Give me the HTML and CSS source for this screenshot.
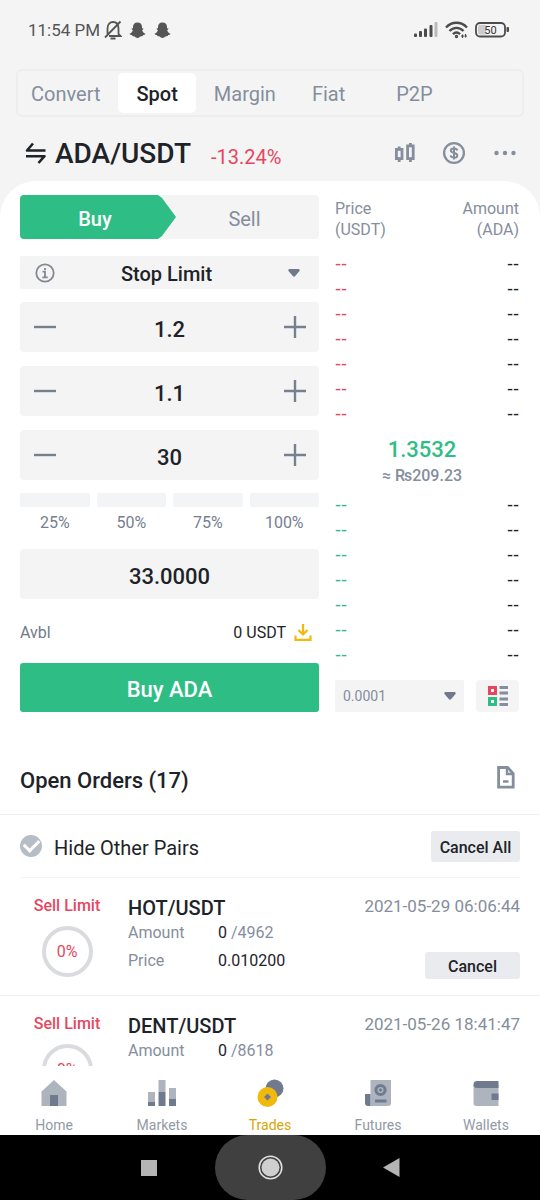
FILE: index.html
```html
<!DOCTYPE html>
<html lang="en">
<head>
<meta charset="utf-8">
<meta name="viewport" content="width=device-width, initial-scale=1">
<title>ADA/USDT</title>
<link rel="stylesheet" href="styles.css">
</head>
<body>
<div class="app">
  <header class="status">
    <div class="status-side">
      <span>11:54 PM</span>
      <svg width="18" height="20" viewBox="0 0 18 20" fill="none" stroke="#555" stroke-width="1.8"><path d="M3.5 14V8.500C3.500 4 6 2 9 2s5.500 2 5.500 6.500V14l2 2H5M1 17.500 16.500 1.500M6.500 18.500h5"/></svg>
      <svg class="ghost" width="17" height="17" viewBox="0 0 17 17" fill="#555"><path d="M8.500 .5c3 0 4.500 2 4.500 4.300v1.500l1.700.2-1.500 1.700c.6 1.800 1.600 3 3.300 3.600-.3 1-1.500 1.200-2.300 1.300-.3 1-.8 1.200-1.800 1.100-1.400-.1-2.300 1.800-3.900 1.800s-2.500-1.900-3.900-1.800c-1 .1-1.500-.1-1.800-1.100-.8-.1-2-.3-2.300-1.300 1.700-.6 2.700-1.800 3.300-3.600L2.300 6.500 4 6.300V4.800C4 2.500 5.500.5 8.500.5z"/></svg>
      <svg class="ghost" width="17" height="17" viewBox="0 0 17 17" fill="#555"><path d="M8.500 .5c3 0 4.500 2 4.500 4.300v1.500l1.700.2-1.500 1.700c.6 1.800 1.600 3 3.300 3.600-.3 1-1.500 1.200-2.300 1.300-.3 1-.8 1.200-1.800 1.100-1.400-.1-2.300 1.800-3.900 1.800s-2.500-1.900-3.900-1.800c-1 .1-1.500-.1-1.800-1.100-.8-.1-2-.3-2.300-1.300 1.700-.6 2.700-1.800 3.300-3.600L2.300 6.500 4 6.300V4.800C4 2.500 5.500.5 8.500.5z"/></svg>
    </div>
    <div class="status-side">
      <svg width="24" height="16" viewBox="0 0 24 16" fill="#4c4c4c"><rect y="11.500" width="3" height="3.500" rx="1"/><rect x="5" y="9" width="3" height="6" rx="1"/><rect x="10" y="6.500" width="3" height="8.500" rx="1"/><rect x="15.500" y="3" width="3" height="12" rx="1"/><rect x="20.500" y="0" width="3" height="15" rx="1" fill="#bbb"/></svg>
      <svg width="23" height="18" viewBox="0 0 23 18" fill="none" stroke="#4c4c4c" stroke-width="2.400"><path d="M1 6.500C7 .2 16 .2 22 6.500M4.500 10c4-4.200 10-4.200 14 0M8 13.200c2-2.200 5-2.200 7 0"/><circle cx="11.500" cy="15.500" r="1" stroke-width="1.500"/><path d="M17.500 17v-3.500M20.500 13v3.500M16 15h3M19.500 15H22" stroke-width="1.200"/></svg>
      <svg width="35" height="16" viewBox="0 0 35 16"><rect x="1" y="1" width="29" height="13.500" rx="4" fill="none" stroke="#4c4c4c" stroke-width="1.800"/><path d="M5 3h6v9.500H5q-2 0-2-2V5q0-2 2-2z" fill="#ccc"/><rect x="31.500" y="5" width="2.500" height="5" rx="1" fill="#4c4c4c"/><text x="15.500" y="12" class="battery" text-anchor="middle">50</text></svg>
    </div>
  </header>

  <nav class="modes">
    <a href="#" class="mode">Convert</a>
    <a href="#" class="mode mode-on">Spot</a>
    <a href="#" class="mode">Margin</a>
    <a href="#" class="mode">Fiat</a>
    <a href="#" class="mode">P2P</a>
  </nav>

  <div class="pair">
    <svg width="22" height="22" viewBox="0 0 22 22" fill="none" stroke="#1e2329" stroke-width="2.600" stroke-linejoin="round"><path d="M8 1.500 2 8.500H20.500M1 14.200h18.500L13.500 21"/></svg>
    <h1 class="pair-name">ADA/USDT</h1>
    <span class="pair-change">-13.24%</span>
    <div class="pair-tools">
      <button class="icon-btn" aria-label="Chart"><svg width="20" height="20" viewBox="0 0 20 20" fill="none" stroke="#848e9c" stroke-width="2.800"><rect x="1.400" y="6.400" width="5.600" height="9.200"/><path d="M4.200 3.500V6M4.200 16v3M15.400 0v3M15.400 16v3"/><rect x="12.600" y="2.900" width="5.600" height="12.700"/></svg></button>
      <button class="icon-btn" aria-label="Buy crypto"><svg width="24" height="24" viewBox="0 0 24 24" fill="none" stroke="#848e9c"><circle cx="12" cy="12" r="9.900" stroke-width="2.300"/><path d="M15.200 9.500C15 8 13.800 7.500 12 7.500c-2 0-3.200.8-3.200 2.100 0 3.200 6.500 1.700 6.500 4.800 0 1.500-1.400 2.200-3.300 2.200s-3.200-.8-3.400-2.200M12 5.500v13" stroke-width="2"/></svg></button>
      <button class="icon-btn" aria-label="More"><svg width="24" height="24" viewBox="0 0 24 24" fill="#848e9c"><circle cx="3.500" cy="12" r="2.200"/><circle cx="12" cy="12" r="2.200"/><circle cx="20.500" cy="12" r="2.200"/></svg></button>
    </div>
  </div>

  <main class="sheet">
    <div class="trade">
      <form class="ticket">
        <div class="sides">
          <button type="button" class="side side-buy">Buy</button>
          <button type="button" class="side side-sell">Sell</button>
        </div>
        <div class="kind">
          <svg width="20" height="20" viewBox="0 0 20 20" fill="none" stroke="#848891" stroke-width="1.800"><circle cx="10" cy="10" r="8.700"/><path d="M7.500 8.700H10V14M7.300 14.300h5.400"/><path d="M10 5v2"/></svg>
          <select class="kind-select" aria-label="Order type"><option>Stop Limit</option></select>
          <svg width="12" height="8" viewBox="0 0 12 8"><path d="M1 0h10q1.200 1 .5 2L7 7.200q-1 .9-2 0L.5 2Q-.2 1 1 0z" fill="#707a8a"/></svg>
        </div>
        <div class="stepper">
          <button type="button" class="step" aria-label="Decrease stop"><svg width="24" height="24" viewBox="0 0 24 24"><path d="M1 12h22" stroke="#76808f" stroke-width="2.400"/></svg></button>
          <input class="value" aria-label="Stop" value="1.2">
          <button type="button" class="step" aria-label="Increase stop"><svg width="24" height="24" viewBox="0 0 24 24"><path d="M1 12h22M12 1v22" stroke="#76808f" stroke-width="2.400"/></svg></button>
        </div>
        <div class="stepper">
          <button type="button" class="step" aria-label="Decrease limit"><svg width="24" height="24" viewBox="0 0 24 24"><path d="M1 12h22" stroke="#76808f" stroke-width="2.400"/></svg></button>
          <input class="value" aria-label="Limit" value="1.1">
          <button type="button" class="step" aria-label="Increase limit"><svg width="24" height="24" viewBox="0 0 24 24"><path d="M1 12h22M12 1v22" stroke="#76808f" stroke-width="2.400"/></svg></button>
        </div>
        <div class="stepper">
          <button type="button" class="step" aria-label="Decrease amount"><svg width="24" height="24" viewBox="0 0 24 24"><path d="M1 12h22" stroke="#76808f" stroke-width="2.400"/></svg></button>
          <input class="value" aria-label="Amount" value="30">
          <button type="button" class="step" aria-label="Increase amount"><svg width="24" height="24" viewBox="0 0 24 24"><path d="M1 12h22M12 1v22" stroke="#76808f" stroke-width="2.400"/></svg></button>
        </div>
        <div class="shares">
          <button type="button" class="share">25%</button>
          <button type="button" class="share">50%</button>
          <button type="button" class="share">75%</button>
          <button type="button" class="share">100%</button>
        </div>
        <input class="value total" aria-label="Total" value="33.0000">
        <div class="avail">
          <span class="avail-label">Avbl</span>
          <span class="avail-sum">0 USDT</span>
          <svg width="18" height="18" viewBox="0 0 18 18" fill="none" stroke="#f0b90b" stroke-width="2.200"><path d="M1.500 11.500v4.400h15v-4.400M9 0v10M4.500 6 9 10.500 13.500 6"/></svg>
        </div>
        <button type="button" class="submit">Buy ADA</button>
      </form>

      <section class="book">
        <table class="depth">
          <thead><tr><th>Price<br>(USDT)</th><th>Amount<br>(ADA)</th></tr></thead>
          <tbody class="asks">
            <tr><td>--</td><td>--</td></tr>
            <tr><td>--</td><td>--</td></tr>
            <tr><td>--</td><td>--</td></tr>
            <tr><td>--</td><td>--</td></tr>
            <tr><td>--</td><td>--</td></tr>
            <tr><td>--</td><td>--</td></tr>
            <tr><td>--</td><td>--</td></tr>
          </tbody>
          <tbody><tr><td colspan="2" class="last"><div class="last-price">1.3532</div><div class="last-fiat">≈ ₨209.23</div></td></tr></tbody>
          <tbody class="bids">
            <tr><td>--</td><td>--</td></tr>
            <tr><td>--</td><td>--</td></tr>
            <tr><td>--</td><td>--</td></tr>
            <tr><td>--</td><td>--</td></tr>
            <tr><td>--</td><td>--</td></tr>
            <tr><td>--</td><td>--</td></tr>
            <tr><td>--</td><td>--</td></tr>
          </tbody>
        </table>
        <div class="book-tools">
          <div class="tick">
            <select class="tick-select" aria-label="Price step"><option>0.0001</option></select>
            <svg width="12" height="8" viewBox="0 0 12 8"><path d="M1 0h10q1.200 1 .5 2L7 7.200q-1 .9-2 0L.5 2Q-.2 1 1 0z" fill="#707a8a"/></svg>
          </div>
          <button class="layout-btn" aria-label="Book layout"><svg width="20" height="20" viewBox="0 0 20 20"><path d="M0 0h9v9H0zM3 3v3h3V3z" fill="#e5475f" fill-rule="evenodd"/><path d="M0 11h9v9H0zM3 14v3h3v-3z" fill="#2ebd85" fill-rule="evenodd"/><path d="M11.500 0H20v3h-8.500zM11.500 5.500H20v3h-8.500zM11.500 11.500H20v3h-8.500zM11.500 17H20v3h-8.500z" fill="#848e9c"/></svg></button>
        </div>
      </section>
    </div>

    <section class="orders">
      <div class="orders-head">
        <h2 class="orders-title">Open Orders (17)</h2>
        <button class="icon-btn history" aria-label="Order history"><svg width="18" height="23" viewBox="0 0 18 23" fill="none" stroke="#848e9c" stroke-width="2.800"><path d="M1.600 1.500h9l5.600 6v13.700H1.600z"/><path d="M10 1.500v6.500h6M6 15.500h5.500" stroke-width="2.400"/></svg></button>
      </div>
      <div class="filter">
        <label class="filter-label"><input type="checkbox" class="tickbox" checked><span class="filter-text">Hide Other Pairs</span></label>
        <button class="chip chip-all">Cancel All</button>
      </div>
      <article class="order">
        <div class="order-side"><span>Sell Limit</span><div class="ring">0%</div></div>
        <div class="order-info">
          <h3 class="order-pair">HOT/USDT</h3>
          <dl class="facts"><dt>Amount</dt><dd>0<span class="muted"> /4962</span></dd><dt>Price</dt><dd>0.010200</dd></dl>
        </div>
        <div class="order-end"><time>2021-05-29 06:06:44</time><button class="chip">Cancel</button></div>
      </article>
      <article class="order">
        <div class="order-side"><span>Sell Limit</span><div class="ring">0%</div></div>
        <div class="order-info">
          <h3 class="order-pair">DENT/USDT</h3>
          <dl class="facts"><dt>Amount</dt><dd>0<span class="muted"> /8618</span></dd></dl>
        </div>
        <div class="order-end"><time>2021-05-26 18:41:47</time></div>
      </article>
    </section>
  </main>

  <nav class="tabs">
    <a href="#" class="tab"><svg width="28" height="28" viewBox="0 0 28 28"><path d="M14 1 26.500 12.500V27H1.500V12.500z" fill="#aeb4be"/><path d="M10 16h8v11h-8z" fill="#707a8f"/></svg>Home</a>
    <a href="#" class="tab"><svg width="28" height="28" viewBox="0 0 28 28"><path d="M0 13h7v10H0zM10.500 1h7v12h-7zM21 9h7v11h-7z" fill="#aeb4be"/><path d="M0 23h7v4H0zM10.500 13h7v14h-7zM21 20h7v7h-7z" fill="#707a8f"/></svg>Markets</a>
    <a href="#" class="tab tab-on"><svg width="28" height="28" viewBox="0 0 28 28"><circle cx="18.500" cy="9.500" r="9" fill="#707a8f"/><circle cx="11.500" cy="18" r="10" fill="#f0b90b"/><path d="m11.500 14.500 3.500 3.500-3.500 3.500L8 18z" fill="#707a8f"/></svg>Trades</a>
    <a href="#" class="tab"><svg width="28" height="28" viewBox="0 0 28 28"><path d="M6.500 1H27v23q0 3-3 3H6.500z" fill="#aeb4be"/><path d="M1 15h5.500v12H4q-3 0-3-3z" fill="#707a8f"/><circle cx="16.500" cy="11" r="4.600" fill="none" stroke="#707a8f" stroke-width="3"/><path d="m16.500 9 2 2-2 2-2-2zM11 20.500h11.500v3H11z" fill="#707a8f"/></svg>Futures</a>
    <a href="#" class="tab"><svg width="28" height="28" viewBox="0 0 28 28"><path d="M1.500 6h25v21h-22q-3 0-3-3z" fill="#aeb4be"/><path d="M5 2h21.500v7H5Q1.500 9 1.500 5.500T5 2zM19.500 14.500h7v6.500h-7z" fill="#707a8f"/></svg>Wallets</a>
  </nav>

  <footer class="system">
    <button class="sys" aria-label="Recent apps"><svg width="16" height="16" viewBox="0 0 16 16"><path d="M0 0h16v16H0z" fill="#b4b4b4"/></svg></button>
    <button class="sys sys-on" aria-label="Home screen"><svg width="25" height="25" viewBox="0 0 25 25"><circle cx="12.500" cy="12.500" r="11.300" fill="none" stroke="#dedede" stroke-width="1.600"/><circle cx="12.500" cy="12.500" r="9" fill="#cfcfcf"/></svg></button>
    <button class="sys" aria-label="Back"><svg width="17" height="19" viewBox="0 0 17 19"><path d="M16.500 0v19L0 9.500z" fill="#b4b4b4"/></svg></button>
  </footer>
</div>
</body>
</html>
```
FILE: styles.css
```css
* { box-sizing: border-box; }

body {
  margin: 0;
  background: #f4f4f4;
  color: #1e2329;
  font-family: Roboto, "Liberation Sans", sans-serif;
  font-size: 16px;
}

h1, h2, h3 { margin: 0; font-weight: 500; }
dl, dd { margin: 0; }
button, input, select { font: inherit; color: inherit; border: 0; padding: 0; background: none; border-radius: 0; }
svg { display: block; flex: none; }
a { color: inherit; text-decoration: none; }

.app { display: flex; flex-direction: column; height: 100vh; }

/* Phone status bar */
.status { display: flex; justify-content: space-between; align-items: center; height: 60px; padding: 0 30px 0 28px; flex: none; color: #555; font-size: 17px; }
.status-side { display: flex; align-items: center; gap: 7px; }
.status-side > span { margin-right: -3px; }
.ghost + .ghost { margin-left: 1px; }
.battery { font-size: 11px; fill: #333; }

.modes { display: flex; height: 48px; margin: 9px 16px 0; padding: 2px; border: 2px solid #ededee; border-radius: 6px; flex: none; }
.mode { display: flex; align-items: center; justify-content: center; padding: 2px 18px 0; border-radius: 5px; font-size: 20px; color: #848e9c; }
.mode:first-child { padding-left: 11px; }
.mode:last-child { padding-left: 33px; }
.mode-on { background: #fff; color: #1e2329; font-weight: 500; }

.pair { display: flex; align-items: center; height: 64px; padding: 8px 23px 0 25px; flex: none; }
.pair-name { margin: 2px 0 0 8px; font-size: 28px; line-height: 32px; }
.pair-change { margin: 7px 0 0 20px; font-size: 20px; color: #e5475f; }
.pair-tools { display: flex; align-items: center; gap: 27px; margin-left: auto; }
.icon-btn { display: block; }

.sheet { flex: 1; min-height: 0; overflow: hidden; background: #fff; border-radius: 36px 36px 0 0; }
.trade { display: grid; grid-template-columns: 299fr 184fr; gap: 16px; padding: 14px 21px 0 20px; }

/* Order ticket */
.ticket { display: flex; flex-direction: column; min-width: 0; }
.sides { display: grid; grid-template-columns: 156fr 143fr; height: 44px; background: #f4f4f4; border-radius: 4px; overflow: hidden; font-size: 20px; }
.side { padding-top: 4px; }
.side-buy { padding-right: 6px; background: #2ebd85; color: #fff; font-weight: 500; clip-path: polygon(0 0, calc(100% - 18px) 0, calc(100% - 14px) 3px, 100% 50%, calc(100% - 14px) calc(100% - 3px), calc(100% - 18px) 100%, 0 100%); }
.side-sell { padding-right: 6px; color: #848e9c; }
.kind { display: flex; align-items: center; height: 33px; margin-top: 17px; padding: 0 19px 0 15px; background: #f4f4f4; border-radius: 2px; }
.kind-select, .tick-select { flex: 1; min-width: 0; appearance: none; }
.kind-select { height: 33px; padding: 3px 10px 0 0; font-size: 20px; font-weight: 500; text-align-last: center; }
.stepper { display: grid; grid-template-columns: 49px 1fr 49px; height: 50px; margin-top: 14px; background: #f4f4f4; border-radius: 4px; }
.kind + .stepper { margin-top: 13px; }
.step { display: grid; place-items: center; }
.value { width: 100%; min-width: 0; padding-top: 4px; text-align: center; font-size: 22px; font-weight: 500; }
.shares { display: grid; grid-template-columns: repeat(4, 1fr); gap: 7px; margin-top: 13px; }
.share { padding: 0; font-size: 16px; line-height: 20px; color: #76808f; }
.share::before { content: ""; display: block; height: 14px; margin-bottom: 6px; background: #f3f4f5; border-radius: 2px; }
.total { height: 50px; margin-top: 16px; background: #f4f4f4; border-radius: 4px; }
.avail { display: flex; align-items: center; height: 64px; padding: 3px 7px 0 0; }
.avail-label { flex: 1; color: #707a8a; }
.avail-sum { margin-right: 8px; }
.submit { height: 49px; padding-top: 4px; background: #2ebd85; border-radius: 3px; color: #fff; font-size: 22px; font-weight: 500; }

/* Order book */
.book { display: flex; flex-direction: column; justify-content: space-between; min-width: 0; }
.depth { width: 100%; margin-top: 3px; border-collapse: collapse; }
.depth th { padding: 0 0 12px; font-size: 16px; font-weight: 400; line-height: 21px; text-align: left; color: #848e9c; }
.depth td { height: 25px; padding: 0; line-height: 25px; font-family: "Liberation Sans", sans-serif; font-size: 18px; }
.depth th:last-child, .depth td:last-child { text-align: right; }
.asks td:first-child { color: #e5475f; }
.bids td:first-child { color: #2ebd85; }
.depth td.last { height: 66px; padding: 9px 10px 5px 0; font-family: inherit; text-align: center; }
.last-price { font-size: 22px; font-weight: 500; line-height: 28px; color: #2ebd85; }
.last-fiat { font-size: 16px; font-weight: 500; line-height: 24px; color: #848e9c; }
.book-tools { display: flex; gap: 12px; height: 32px; }
.tick { display: flex; flex: 1; align-items: center; padding: 0 8px; background: #f4f4f4; border-radius: 2px; }
.tick-select { font-size: 14px; height: 32px; color: #848e9c; }
.layout-btn { display: grid; place-items: center; width: 43px; background: #f4f4f4; border-radius: 4px; }

/* Open orders */
.orders-head { display: flex; align-items: center; justify-content: space-between; height: 103px; padding: 34px 25px 0 20px; border-bottom: 1px solid #eff0f2; }
.orders-title { font-size: 22px; }
.history { margin-bottom: 6px; }
.filter { display: flex; align-items: center; justify-content: space-between; height: 63px; margin: 0 20px; border-bottom: 1px solid #f5f5f6; }
.filter-label { display: flex; align-items: center; gap: 12px; font-size: 20px; }
.filter-text { padding-top: 3px; }
.tickbox { appearance: none; width: 22px; height: 22px; margin: 0; border-radius: 50%; background: #b7bdc6; display: grid; place-items: center; }
.tickbox:checked::before { content: ""; width: 12px; height: 7px; margin-bottom: 4px; border: solid #fff; border-width: 0 0 3px 3px; transform: rotate(-45deg); }
.chip { width: 95px; height: 27px; padding-top: 3px; background: #eaebee; border-radius: 3px; font-size: 16px; font-weight: 500; }
.chip-all { width: 89px; height: 31px; }
.order { display: grid; grid-template-columns: 94px 1fr auto; column-gap: 14px; height: 118px; padding: 17px 20px 0; border-bottom: 1px solid #eff0f2; }
.order-side { display: flex; flex-direction: column; align-items: center; color: #e5475f; font-weight: 500; line-height: 22px; }
.ring { display: grid; place-items: center; width: 51px; height: 51px; margin-top: 9px; border: 4px solid #d9dbdf; border-radius: 50%; font-weight: 400; }
.order-pair { font-size: 20px; line-height: 26px; }
.facts { display: grid; grid-template-columns: 90px 1fr; line-height: 24px; row-gap: 4px; }
.facts dt, .muted { color: #848e9c; }
.order-end { display: flex; flex-direction: column; align-items: flex-end; justify-content: space-between; padding-bottom: 16px; font-size: 17px; line-height: 22px; color: #848e9c; }
.order-end .chip { color: #1e2329; }

/* Bottom navigation */
.tabs { display: grid; grid-template-columns: repeat(5, 1fr); height: 69px; padding-top: 13px; background: #fff; flex: none; }
.tab { display: flex; flex-direction: column; align-items: center; gap: 9px; font-size: 14px; line-height: 18px; color: #9299a5; }
.tab-on { color: #d9a406; }
.system { display: grid; grid-template-columns: repeat(3, 111px); justify-content: center; column-gap: 10px; height: 65px; background: #000; flex: none; }
.sys { display: grid; place-items: center; }
.sys-on { background: #404040; border-radius: 33px; }
```
